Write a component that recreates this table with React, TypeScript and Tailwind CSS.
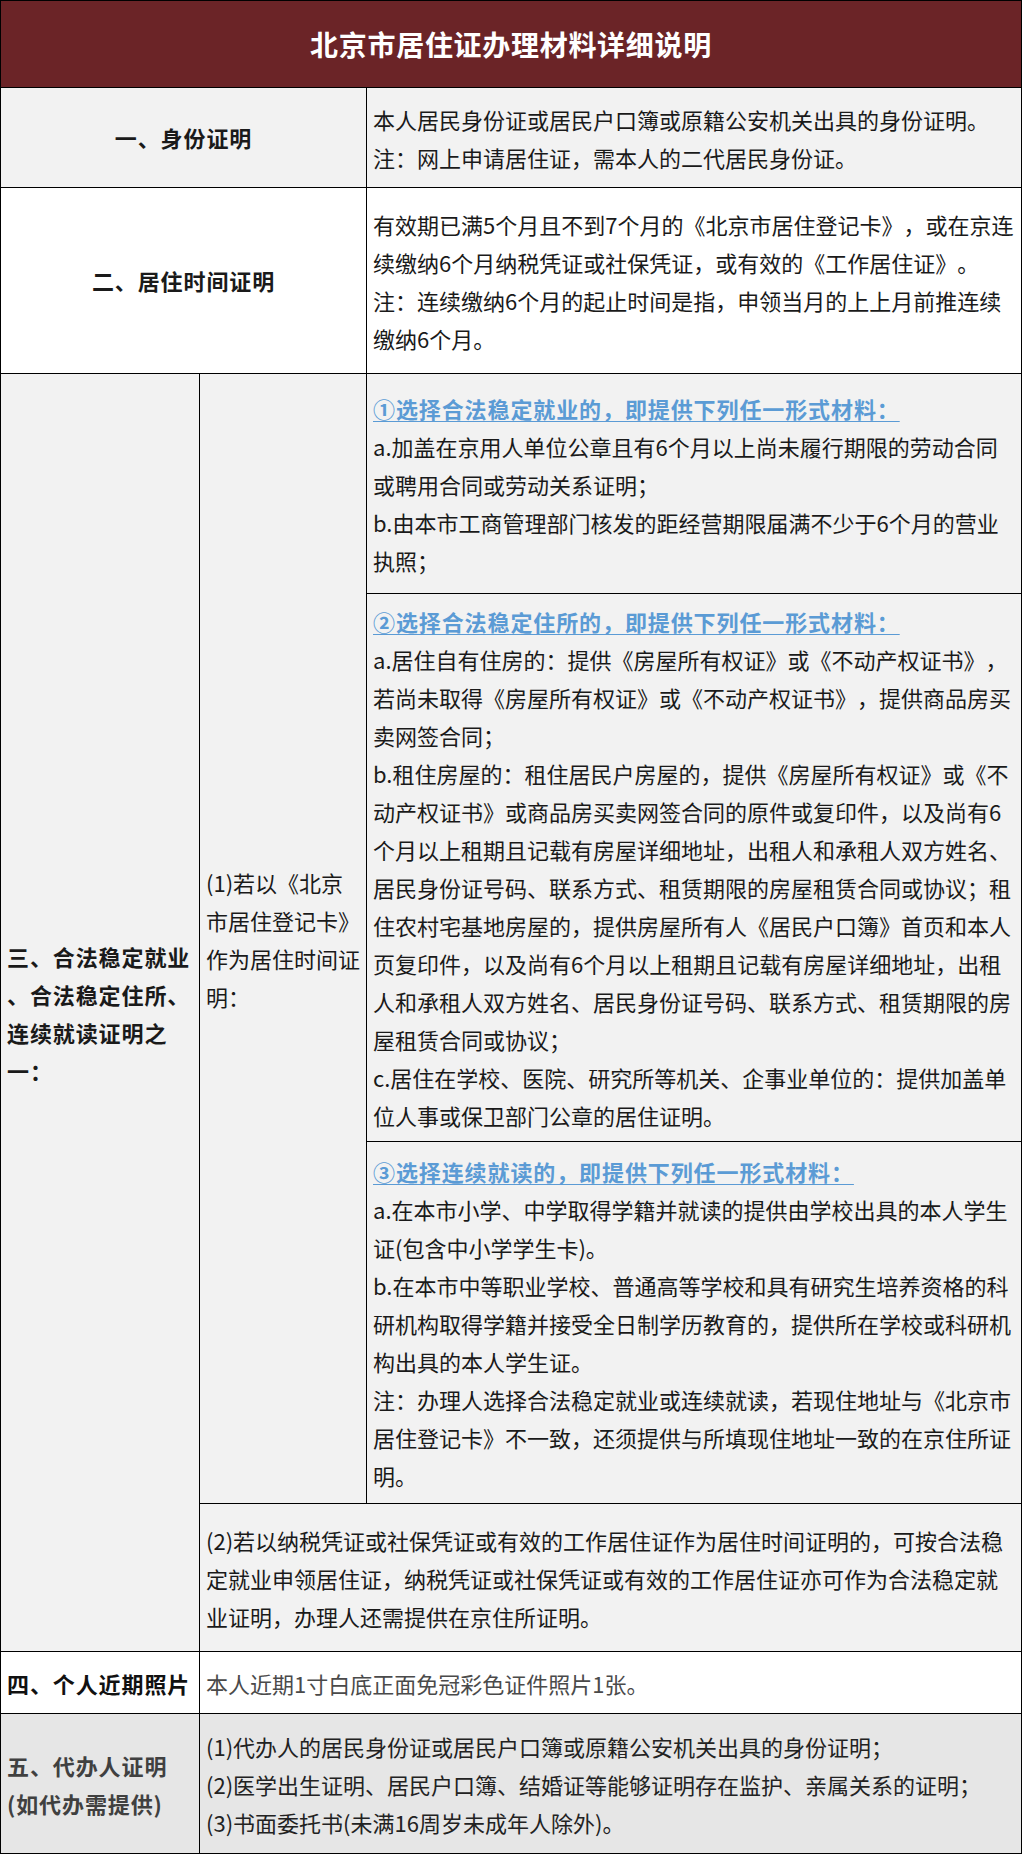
import React from "react";

const L = ({ children }: { children: React.ReactNode }) => (
  <div className="whitespace-nowrap leading-[38px]">{children}</div>
);

const H = ({ children }: { children: React.ReactNode }) => (
  <div className="whitespace-nowrap leading-[38px]">
    <span className="font-bold tracking-[0.9px] text-[#5b9bd5] underline decoration-[#5b9bd5] decoration-1 underline-offset-[3px]">
      {children}
    </span>
  </div>
);

export default function App() {
  return (
    <div
      className="w-[1022px] border border-black bg-white text-[22px] text-[#1a1a1a] [text-spacing-trim:space-all]"
      style={{ fontFamily: '"Noto Sans CJK SC", "Noto Sans", sans-serif' }}
    >
      {/* Header */}
      <div className="flex h-[87px] items-center justify-center border-b border-black bg-[#6b2427]">
        <span className="text-[28px] font-bold tracking-[0.7px] text-white">北京市居住证办理材料详细说明</span>
      </div>

      {/* Row 1 */}
      <div className="flex border-b border-black bg-[#f2f2f2]">
        <div className="flex w-[366px] shrink-0 items-center justify-center border-r border-black font-bold tracking-[0.9px]">
          一、身份证明
        </div>
        <div className="min-w-0 flex-1 px-[6px] pt-[12px] pb-[11px]">
          <L>本人居民身份证或居民户口簿或原籍公安机关出具的身份证明。</L>
          <L>注：网上申请居住证，需本人的二代居民身份证。</L>
        </div>
      </div>

      {/* Row 2 */}
      <div className="flex border-b border-black bg-white">
        <div className="flex w-[366px] shrink-0 items-center justify-center border-r border-black font-bold tracking-[0.9px]">
          二、居住时间证明
        </div>
        <div className="min-w-0 flex-1 px-[6px] pt-[17px] pb-[16px]">
          <L>有效期已满5个月且不到7个月的《北京市居住登记卡》，或在京连</L>
          <L>续缴纳6个月纳税凭证或社保凭证，或有效的《工作居住证》。</L>
          <L>注：连续缴纳6个月的起止时间是指，申领当月的上上月前推连续</L>
          <L>缴纳6个月。</L>
        </div>
      </div>

      {/* Row 3 */}
      <div className="flex border-b border-black bg-[#f2f2f2]">
        <div className="flex w-[199px] shrink-0 items-center border-r border-black px-[6px] font-bold tracking-[0.9px]">
          <div>
            <L>三、合法稳定就业</L>
            <L>、合法稳定住所、</L>
            <L>连续就读证明之</L>
            <L>一：</L>
          </div>
        </div>
        <div className="flex min-w-0 flex-1 flex-col">
          <div className="flex">
            <div className="flex w-[167px] shrink-0 items-center border-r border-black px-[6px]">
              <div>
                <L>(1)若以《北京</L>
                <L>市居住登记卡》</L>
                <L>作为居住时间证</L>
                <L>明：</L>
              </div>
            </div>
            <div className="flex min-w-0 flex-1 flex-col">
              <div className="border-b border-black px-[6px] pt-[15px] pb-[14px]">
                <H>①选择合法稳定就业的，即提供下列任一形式材料：</H>
                <L>a.加盖在京用人单位公章且有6个月以上尚未履行期限的劳动合同</L>
                <L>或聘用合同或劳动关系证明；</L>
                <L>b.由本市工商管理部门核发的距经营期限届满不少于6个月的营业</L>
                <L>执照；</L>
              </div>
              <div className="border-b border-black px-[6px] pt-[8px] pb-[7px]">
                <H>②选择合法稳定住所的，即提供下列任一形式材料：</H>
                <L>a.居住自有住房的：提供《房屋所有权证》或《不动产权证书》，</L>
                <L>若尚未取得《房屋所有权证》或《不动产权证书》，提供商品房买</L>
                <L>卖网签合同；</L>
                <L>b.租住房屋的：租住居民户房屋的，提供《房屋所有权证》或《不</L>
                <L>动产权证书》或商品房买卖网签合同的原件或复印件，以及尚有6</L>
                <L>个月以上租期且记载有房屋详细地址，出租人和承租人双方姓名、</L>
                <L>居民身份证号码、联系方式、租赁期限的房屋租赁合同或协议；租</L>
                <L>住农村宅基地房屋的，提供房屋所有人《居民户口簿》首页和本人</L>
                <L>页复印件，以及尚有6个月以上租期且记载有房屋详细地址，出租</L>
                <L>人和承租人双方姓名、居民身份证号码、联系方式、租赁期限的房</L>
                <L>屋租赁合同或协议；</L>
                <L>c.居住在学校、医院、研究所等机关、企事业单位的：提供加盖单</L>
                <L>位人事或保卫部门公章的居住证明。</L>
              </div>
              <div className="px-[6px] pt-[10px] pb-[9px]">
                <H>③选择连续就读的，即提供下列任一形式材料：</H>
                <L>a.在本市小学、中学取得学籍并就读的提供由学校出具的本人学生</L>
                <L>证(包含中小学学生卡)。</L>
                <L>b.在本市中等职业学校、普通高等学校和具有研究生培养资格的科</L>
                <L>研机构取得学籍并接受全日制学历教育的，提供所在学校或科研机</L>
                <L>构出具的本人学生证。</L>
                <L>注：办理人选择合法稳定就业或连续就读，若现住地址与《北京市</L>
                <L>居住登记卡》不一致，还须提供与所填现住地址一致的在京住所证</L>
                <L>明。</L>
              </div>
            </div>
          </div>
          <div className="border-t border-black px-[6px] pt-[17px] pb-[16px]">
            <L>(2)若以纳税凭证或社保凭证或有效的工作居住证作为居住时间证明的，可按合法稳</L>
            <L>定就业申领居住证，纳税凭证或社保凭证或有效的工作居住证亦可作为合法稳定就</L>
            <L>业证明，办理人还需提供在京住所证明。</L>
          </div>
        </div>
      </div>

      {/* Row 4 */}
      <div className="flex border-b border-black bg-white">
        <div className="flex w-[199px] shrink-0 items-center border-r border-black px-[6px] font-bold tracking-[0.9px] text-[#111]">
          <L>四、个人近期照片</L>
        </div>
        <div className="min-w-0 flex-1 px-[6px] pt-[12px] pb-[11px] text-[#4a4a4a]">
          <L>本人近期1寸白底正面免冠彩色证件照片1张。</L>
        </div>
      </div>

      {/* Row 5 */}
      <div className="flex bg-[#e6e6e6]">
        <div className="flex w-[199px] shrink-0 items-center border-r border-black px-[6px] font-bold tracking-[0.9px] text-[#404040]">
          <div>
            <L>五、代办人证明</L>
            <L>(如代办需提供)</L>
          </div>
        </div>
        <div className="min-w-0 flex-1 px-[6px] pt-[13px] pb-[12px] text-[#222]">
          <L>(1)代办人的居民身份证或居民户口簿或原籍公安机关出具的身份证明；</L>
          <L>(2)医学出生证明、居民户口簿、结婚证等能够证明存在监护、亲属关系的证明；</L>
          <L>(3)书面委托书(未满16周岁未成年人除外)。</L>
        </div>
      </div>
    </div>
  );
}
